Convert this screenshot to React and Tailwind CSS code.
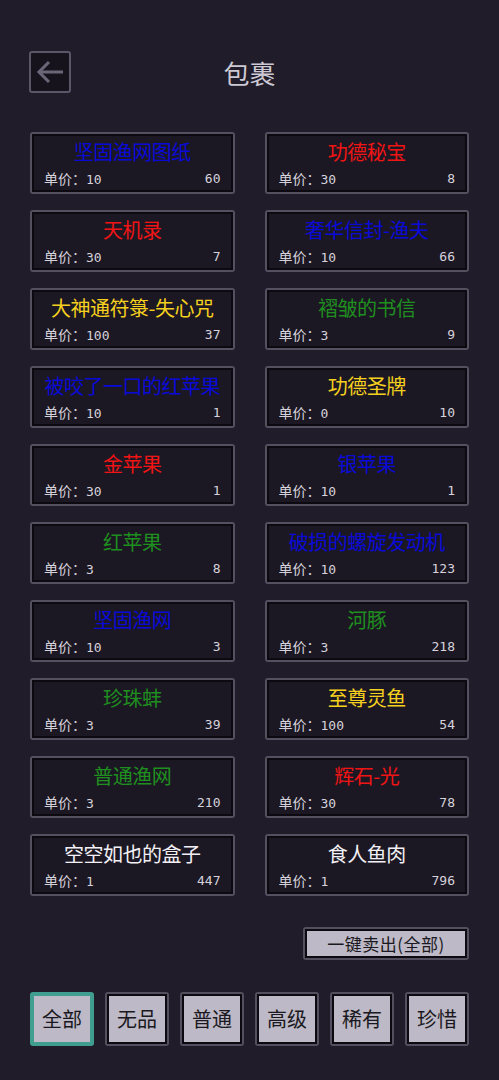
import React from 'react';

const COLORS = {
  blue: 'text-[#0a0ad8]',
  red: 'text-[#f01414]',
  yellow: 'text-[#f5d01e]',
  green: 'text-[#1f8f1f]',
  white: 'text-[#f2f0f5]',
};

const items = [
  ['坚固渔网图纸', 'blue', 10, 60],
  ['功德秘宝', 'red', 30, 8],
  ['天机录', 'red', 30, 7],
  ['奢华信封-渔夫', 'blue', 10, 66],
  ['大神通符箓-失心咒', 'yellow', 100, 37],
  ['褶皱的书信', 'green', 3, 9],
  ['被咬了一口的红苹果', 'blue', 10, 1],
  ['功德圣牌', 'yellow', 0, 10],
  ['金苹果', 'red', 30, 1],
  ['银苹果', 'blue', 10, 1],
  ['红苹果', 'green', 3, 8],
  ['破损的螺旋发动机', 'blue', 10, 123],
  ['坚固渔网', 'blue', 10, 3],
  ['河豚', 'green', 3, 218],
  ['珍珠蚌', 'green', 3, 39],
  ['至尊灵鱼', 'yellow', 100, 54],
  ['普通渔网', 'green', 3, 210],
  ['辉石-光', 'red', 30, 78],
  ['空空如也的盒子', 'white', 1, 447],
  ['食人鱼肉', 'white', 1, 796],
];

const tabs = ['全部', '无品', '普通', '高级', '稀有', '珍惜'];

const font = { fontFamily: '"Noto Sans CJK SC", "DejaVu Sans", sans-serif' };

function ItemCard({ name, color, price, count }) {
  return (
    <div className="h-[62px] rounded-[3px] bg-[#55505f] p-[2px]">
      <div className="flex h-full flex-col border-2 border-[#0c0a10] bg-[#1c1823] px-[10px]">
        <div className={`mt-[3px] text-center text-[20px] leading-[26px] tracking-[-0.5px] whitespace-nowrap ${COLORS[color]}`}>
          {name}
        </div>
        <div className="mt-[4px] flex items-center justify-between text-[14px] leading-[18px] text-[#d6d2dc]">
          <span>
            单价：<span className="font-['DejaVu_Sans_Mono'] text-[13px]">{price}</span>
          </span>
          <span className="font-['DejaVu_Sans_Mono'] text-[13px]">{count}</span>
        </div>
      </div>
    </div>
  );
}

export default function App() {
  return (
    <div className="min-h-[1080px] w-[499px] bg-[#201c29]" style={font}>
      {/* Header */}
      <div className="relative flex h-[44px] items-center justify-center pt-[51px] pb-[4px] box-content">
        <button className="absolute left-[29px] top-[51px] flex h-[42px] w-[42px] items-center justify-center rounded-[3px] border-2 border-[#5b5668] bg-[#16131c]">
          <svg width="30" height="26" viewBox="0 0 30 26" fill="none" stroke="#6c6679" strokeWidth="3">
            <path d="M28 13H4" />
            <path d="M14 3L4 13L14 23" />
          </svg>
        </button>
        <h1 className="text-[26px] leading-[44px] text-[#cdc9d4]">包裹</h1>
      </div>

      {/* Items grid */}
      <div className="mt-[33px] grid grid-cols-2 gap-x-[30px] gap-y-[16px] px-[30px]">
        {items.map(([name, color, price, count]) => (
          <ItemCard key={name} name={name} color={color} price={price} count={count} />
        ))}
      </div>

      {/* Sell all */}
      <div className="mt-[31px] flex justify-end pr-[30px]">
        <button className="h-[33px] w-[166px] rounded-[3px] bg-[#55505f] p-[2px]">
          <div className="flex h-full items-center justify-center border-2 border-[#0c0a10] bg-[#bdb9c6] text-[17px] tracking-[0.5px] text-[#1a1820]">
            一键卖出(全部)
          </div>
        </button>
      </div>

      {/* Tabs */}
      <div className="mt-[32px] flex gap-[11px] px-[30px]">
        {tabs.map((t, i) => (
          <button
            key={t}
            className={`h-[54px] w-[64px] rounded-[3px] p-[2px] ${i === 0 ? 'bg-[#3f9e90]' : 'bg-[#55505f]'}`}
          >
            <div
              className={`flex h-full items-center justify-center bg-[#bdb9c6] text-[20px] text-[#1a1820] ${
                i === 0 ? 'border-2 border-[#3f9e90]' : 'border-2 border-[#0c0a10]'
              }`}
            >
              {t}
            </div>
          </button>
        ))}
      </div>
    </div>
  );
}
